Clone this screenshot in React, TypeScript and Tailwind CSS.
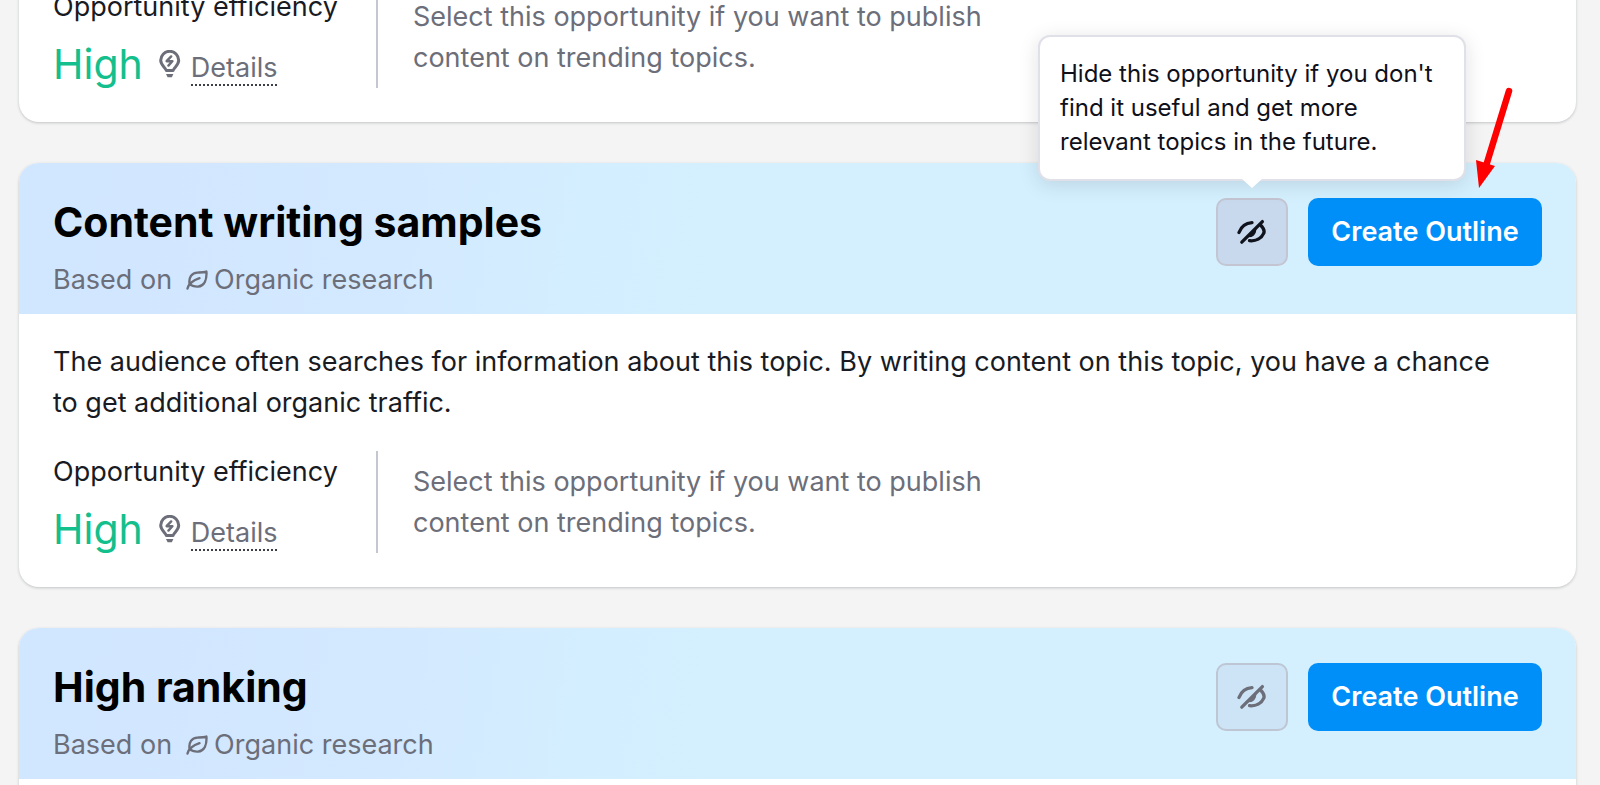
import { useId } from "react";

const topics = [
  { title: "Content writing samples", hovered: true },
  { title: "High ranking", hovered: false },
];

function HideIcon() {
  return (
    <svg width="30" height="28" viewBox="0 0 30 28" fill="none" stroke="currentColor" strokeWidth="3.3" strokeLinecap="round" aria-hidden="true">
      <path d="M2 14.5C4 9 9 5.2 15 4.7" />
      <path d="M4.8 24.2 25.4 3.6" />
      <path d="M23.5 7C26.6 10 27.8 12.4 26.8 15.2 24.6 20.4 19 23.4 12.5 22.7" />
      <path d="M11.5 18.5C15.5 18.5 18.3 16 18.5 12.5Z" fill="currentColor" strokeWidth="1.5" />
    </svg>
  );
}

function LeafIcon() {
  return (
    <svg width="22" height="20" viewBox="0 0 22 20" fill="none" stroke="currentColor" strokeWidth="2.4" strokeLinecap="round" strokeLinejoin="round" aria-hidden="true">
      <path d="M1.5 18.5C2.5 14.5 6 10.8 13.5 8.2" />
      <path d="M3.6 13.8C2.6 7.5 5.6 2.8 11.5 2.6 14.5 2.5 17.5 2.6 20.4 1.6 21 9.5 18.4 16 12 16.6 9.4 16.8 7 16.4 4.8 15" />
    </svg>
  );
}

function BulbIcon() {
  return (
    <svg width="22" height="28" viewBox="0 0 22 28" fill="none" stroke="currentColor" strokeLinecap="round" strokeLinejoin="round" aria-hidden="true">
      <path d="M7.2 20.4C6.8 17.6 1.7 15.6 1.7 10.3A9 9 0 0 1 19.7 10.3C19.7 15.6 14.6 17.6 14.2 20.4Z" strokeWidth="3" />
      <path d="M12.2 6.4 7.6 11.2H13.4L9.4 15.6" strokeWidth="2.4" />
      <path d="M7 24H14.4L12.8 27.2H8.6Z" fill="currentColor" stroke="none" />
    </svg>
  );
}

function PointerArrow() {
  return (
    <svg className="absolute bottom-full right-7 mb-2 pointer-events-none" width="40" height="104" viewBox="0 0 40 104" aria-hidden="true">
      <path d="M35 5 12 80" stroke="#ff0000" strokeWidth="6.5" strokeLinecap="round" />
      <path d="M2 74 21 80 5 102Z" fill="#ff0000" />
    </svg>
  );
}

function HideTooltip({ id }: { id: string }) {
  return (
    <div
      id={id}
      role="tooltip"
      className="absolute bottom-full left-1/2 z-10 mb-[17px] w-[428px] -translate-x-1/2 rounded-xl border-2 border-[#dfe0e8] bg-white p-5 text-2xl leading-[34px] text-[#0f1019] shadow-[0_4px_20px_rgba(25,27,35,0.13)]"
    >
      Hide this opportunity if you don't find it useful and get more relevant topics in the future.
      <svg className="absolute left-1/2 top-full -translate-x-1/2" width="20" height="10" viewBox="0 0 20 10" aria-hidden="true">
        <path d="M0 0 10 9 20 0Z" fill="#fff" />
      </svg>
    </div>
  );
}

function Efficiency() {
  return (
    <div className="flex h-[102px]">
      <div className="w-[325px] border-r-2 border-[#c4c7cf]">
        <p className="text-[#191b23]">Opportunity efficiency</p>
        <div className="mt-[7px] flex items-center">
          <span className="text-[41px] leading-[60px] text-[#13bf8c]">High</span>
          <span className="ml-4 text-[#6c6e79]">
            <BulbIcon />
          </span>
          <a href="#details" className="ml-2.5 mt-2 border-b-2 border-dotted border-[#3c3e48] pt-0.5 leading-[32px] text-[#6c6e79]">
            Details
          </a>
        </div>
      </div>
      <p className="w-[640px] self-center pl-[35px] text-[#6c6e79]">
        Select this opportunity if you want to publish content on trending topics.
      </p>
    </div>
  );
}

function TopicCard({ title, hovered }: { title: string; hovered: boolean }) {
  const tooltipId = useId();

  return (
    <article className="rounded-[20px] bg-white shadow-[0_1px_3px_rgba(25,27,35,0.22)]">
      <header className="flex items-start justify-between rounded-t-[20px] bg-[linear-gradient(100deg,#d1e6ff_0%,#d3e9ff_25%,#d3eeff_36%,#d4f0fe_46%)] px-[34px] pb-3.5 pt-[35px]">
        <div>
          <h2 className="text-[41px] font-bold leading-[48px] text-black">{title}</h2>
          <p className="mt-[13px] flex items-center text-[27px] leading-[41px] text-[#6c6e79]">
            Based on
            <span className="ml-3.5 mr-1.5">
              <LeafIcon />
            </span>
            Organic research
          </p>
        </div>
        <div className="flex gap-5">
          <div className="relative">
            <button
              type="button"
              aria-label="Hide this opportunity"
              aria-describedby={hovered ? tooltipId : undefined}
              className={
                hovered
                  ? "flex h-[68px] w-[72px] items-center justify-center rounded-[10px] border-2 border-[#c3c5d2] bg-[#c8d9ed] text-[#10131c]"
                  : "flex h-[68px] w-[72px] items-center justify-center rounded-[10px] border-2 border-[#bec5d3] bg-[#cde4f7] text-[#6c6e79]"
              }
            >
              <HideIcon />
            </button>
            {hovered && <HideTooltip id={tooltipId} />}
          </div>
          <div className="relative">
            <button
              type="button"
              className="h-[68px] w-[234px] whitespace-nowrap rounded-[10px] bg-[#008ff8] text-[27px] font-semibold text-white"
            >
              Create Outline
            </button>
            {hovered && <PointerArrow />}
          </div>
        </div>
      </header>

      <div className="px-[34px] pb-[34px] pt-[27px] text-[27px] leading-[41px]">
        <p className="mb-7 pr-6 text-[#191b23]">
          The audience often searches for information about this topic. By writing content on this topic, you have a
          chance to get additional organic traffic.
        </p>
        <Efficiency />
      </div>
    </article>
  );
}

export default function App() {
  return (
    <main className="h-screen overflow-hidden bg-[#f4f4f4] pl-[19px] pr-6 font-['Inter',sans-serif]">
      <div className="-mt-3.5 flex flex-col gap-[41px]">
        {/* tail of the card scrolled past the top edge */}
        <article className="rounded-b-[20px] bg-white px-[34px] pb-[34px] text-[27px] leading-[41px] shadow-[0_1px_3px_rgba(25,27,35,0.22)]">
          <Efficiency />
        </article>
        {topics.map((topic) => (
          <TopicCard key={topic.title} title={topic.title} hovered={topic.hovered} />
        ))}
      </div>
    </main>
  );
}
